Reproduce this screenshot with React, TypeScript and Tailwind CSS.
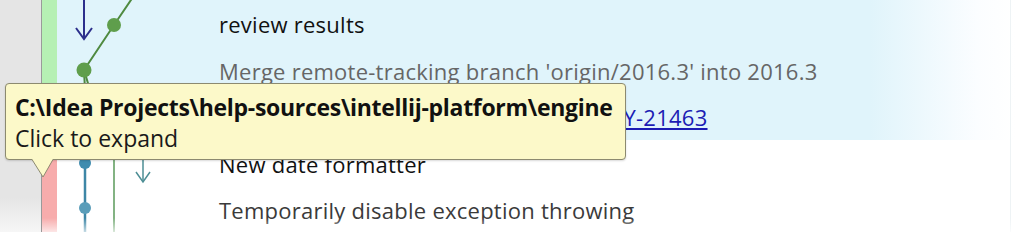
import React from 'react'

interface Row {
  stripe: string
  selected: boolean
  content: React.ReactNode
  height: string
}

const rows: Row[] = [
  {
    stripe: 'bg-[#b6f0b4]',
    selected: true,
    height: 'h-[47px]',
    content: <span className="text-[#111111]">review results</span>,
  },
  {
    stripe: 'bg-[#b6f0b4]',
    selected: true,
    height: 'h-[46px]',
    content: <span className="text-[#666666]">Merge remote-tracking branch 'origin/2016.3' into 2016.3</span>,
  },
  {
    stripe: 'bg-[#b6f0b4]',
    selected: true,
    height: 'h-[47px]',
    content: (
      <span className="text-[#111111]">
        <span className="inline-block w-[391px]">Fix formatting of date</span>
        <a className="text-[#1c1cb4] underline">PY-21463</a>
      </span>
    ),
  },
  {
    stripe: 'bg-[#f7acac]',
    selected: false,
    height: 'h-[46px]',
    content: <span className="text-[#111111]">New date formatter</span>,
  },
  {
    stripe: 'bg-[#f7acac]',
    selected: false,
    height: 'h-[46px]',
    content: <span className="text-[#3a3a3a]">Temporarily disable exception throwing</span>,
  },
]

function Graph() {
  return (
    <svg className="absolute left-[15px] top-0 pointer-events-none" width="200" height="232" viewBox="0 0 200 232">
      {/* navy arrow, top-left */}
      <line x1="27" y1="0" x2="27" y2="38" stroke="#2c2f8c" strokeWidth="2" />
      <polyline points="19,28 27,39 35,28" fill="none" stroke="#2c2f8c" strokeWidth="2" />
      {/* green branch */}
      <polyline points="76,-3 57,25 27,70" fill="none" stroke="#4f8a40" strokeWidth="2" />
      <line x1="27" y1="70" x2="33" y2="90" stroke="#4f8a40" strokeWidth="2" />
      <line x1="27" y1="70" x2="28" y2="90" stroke="#4f8a40" strokeWidth="2" />
      <circle cx="57" cy="25" r="7" fill="#5f9e4c" />
      <circle cx="27" cy="70" r="7.5" fill="#5f9e4c" />
      {/* blue branch */}
      <line x1="28" y1="150" x2="28" y2="232" stroke="#3d86a6" strokeWidth="2.5" />
      <circle cx="28" cy="163" r="6" fill="#3f8caf" />
      <circle cx="28" cy="208" r="6" fill="#5a9db9" />
      {/* green trunk */}
      <line x1="57" y1="150" x2="57" y2="232" stroke="#5a9a5a" strokeWidth="1.5" />
      {/* teal arrow */}
      <line x1="86" y1="158" x2="86" y2="182" stroke="#4d8e95" strokeWidth="1.5" />
      <polyline points="79,172 86,182 93,172" fill="none" stroke="#4d8e95" strokeWidth="1.5" />
    </svg>
  )
}

function Tooltip() {
  return (
    <div className="absolute left-[5px] top-[83px] z-10">
      <div className="relative w-[621px] h-[77px] rounded-[4px] border border-[#8c8a70] bg-[#fcf9c9] pl-[9px] pt-[8px] shadow-[0_1px_2px_rgba(0,0,0,0.15)]">
        <div className="font-bold text-[23px] leading-[31px] text-[#111111] tracking-[-0.3px] whitespace-nowrap">
          C:\Idea Projects\help-sources\intellij-platform\engine
        </div>
        <div className="text-[23px] leading-[31px] text-[#1a1a1a]">Click to expand</div>
      </div>
      <svg className="absolute left-[26px] top-[76px]" width="26" height="20" viewBox="0 0 26 20">
        <polygon points="1,0 12,18 22,0" fill="#fcf9c9" />
        <polyline points="1,0.5 12,18 22,0.5" fill="none" stroke="#8c8a70" strokeWidth="1" />
      </svg>
    </div>
  )
}

export default function App() {
  return (
    <div
      className="relative w-[1016px] h-[232px] overflow-hidden bg-white flex"
      style={{ fontFamily: '"Open Sans", "Noto Sans", sans-serif' }}
    >
      {/* Left gutter */}
      <div className="w-[42px] shrink-0 bg-[linear-gradient(to_bottom,#e5e5e5_85%,#f6f6f6_100%)] border-r border-[#9a9a9a]" />

      {/* Log table */}
      <div className="relative flex-1 flex flex-col">
        {rows.map((row, i) => (
          <div
            key={i}
            className={`flex items-center ${row.height} ${
              row.selected
                ? 'bg-[linear-gradient(to_right,#e0f4fb_0%,#e0f4fb_85%,#fbfdff_96%,#ffffff_100%)]'
                : 'bg-white'
            }`}
          >
            <div className={`w-[15px] h-full shrink-0 ${row.stripe}`} />
            <div className="w-[162px] h-full shrink-0" />
            <div className="text-[22px] tracking-[0.25px] whitespace-nowrap leading-none pt-[1px]">{row.content}</div>
          </div>
        ))}
        <Graph />
        <div className="absolute right-[5px] top-0 bottom-0 w-px bg-[#eef3f5]" />
        <div className="absolute left-0 right-0 bottom-0 h-[14px] bg-[linear-gradient(to_bottom,rgba(255,255,255,0),rgba(255,255,255,0.7))]" />
      </div>

      <Tooltip />
    </div>
  )
}
